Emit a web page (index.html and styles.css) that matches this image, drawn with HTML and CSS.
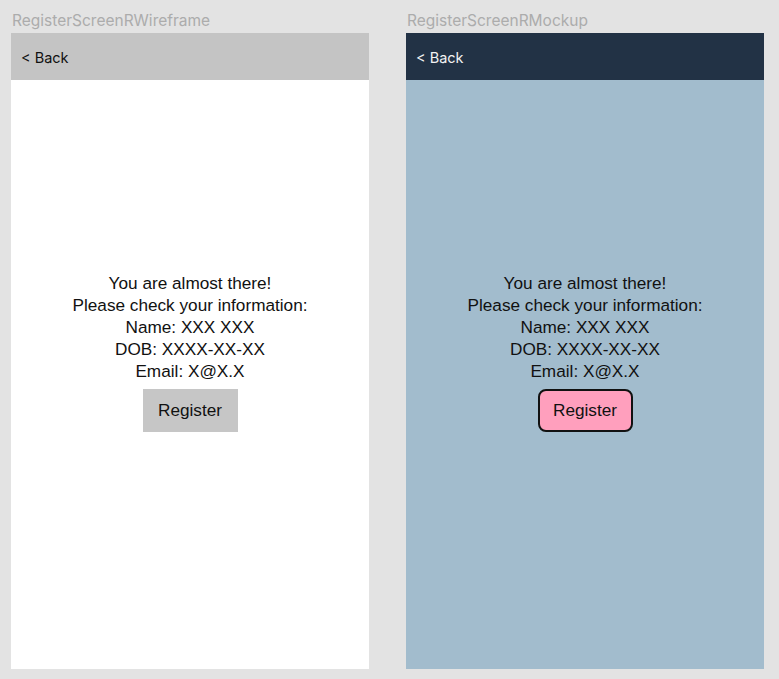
FILE: index.html
```html
<!DOCTYPE html>
<html>
<head>
<meta charset="utf-8">
<link rel="stylesheet" href="styles.css">
</head>
<body>
<div class="canvas">
  <div class="artboard">
    <div class="label">RegisterScreenRWireframe</div>
    <div class="screen wire">
      <div class="header"><span class="back">&lt; Back</span></div>
      <div class="content">
        <p class="info">You are almost there!<br>Please check your information:<br>Name: XXX XXX<br>DOB: XXXX-XX-XX<br>Email: X@X.X</p>
        <div class="btn">Register</div>
      </div>
    </div>
  </div>
  <div class="artboard">
    <div class="label">RegisterScreenRMockup</div>
    <div class="screen mock">
      <div class="header"><span class="back">&lt; Back</span></div>
      <div class="content">
        <p class="info">You are almost there!<br>Please check your information:<br>Name: XXX XXX<br>DOB: XXXX-XX-XX<br>Email: X@X.X</p>
        <div class="btn">Register</div>
      </div>
    </div>
  </div>
</div>
</body>
</html>
```
FILE: styles.css
```css
html, body {
  margin: 0;
  padding: 0;
  background: #e3e3e3;
}
body {
  width: 779px;
  height: 679px;
  overflow: hidden;
  font-family: "Liberation Sans", Arial, sans-serif;
}
.canvas {
  display: flex;
  gap: 37px;
  padding-left: 11px;
}
.artboard {
  width: 358px;
  display: flex;
  flex-direction: column;
}
.label {
  height: 33px;
  box-sizing: border-box;
  padding-top: 11px;
  padding-left: 1px;
  font-family: "Inter", "Liberation Sans", sans-serif;
  font-size: 15.5px;
  line-height: 19px;
  color: #acacac;
}
.screen {
  height: 636px;
  display: flex;
  flex-direction: column;
}
.header {
  height: 47px;
  display: flex;
  align-items: center;
  padding-left: 10px;
  padding-top: 1px;
  box-sizing: border-box;
}
.back {
  font-family: "Inter", "Liberation Sans", sans-serif;
  font-size: 14.5px;
}
.content {
  flex: 1;
  display: flex;
  flex-direction: column;
  align-items: center;
  padding-top: 192px;
}
.info {
  margin: 0;
  text-align: center;
  font-size: 17.2px;
  line-height: 22px;
  color: #111;
}
.btn {
  margin-top: 7px;
  width: 95px;
  height: 43px;
  box-sizing: border-box;
  display: flex;
  align-items: center;
  justify-content: center;
  font-size: 17.2px;
  color: #111;
}
.wire { background: #ffffff; }
.wire .header { background: #c4c4c4; color: #111; }
.wire .btn { background: #c6c6c6; }
.mock { background: #a2bccd; }
.mock .header { background: #223245; color: #f2f2f2; }
.mock .btn {
  background: #ff9fbd;
  border: 2px solid #111;
  border-radius: 8px;
}
```
